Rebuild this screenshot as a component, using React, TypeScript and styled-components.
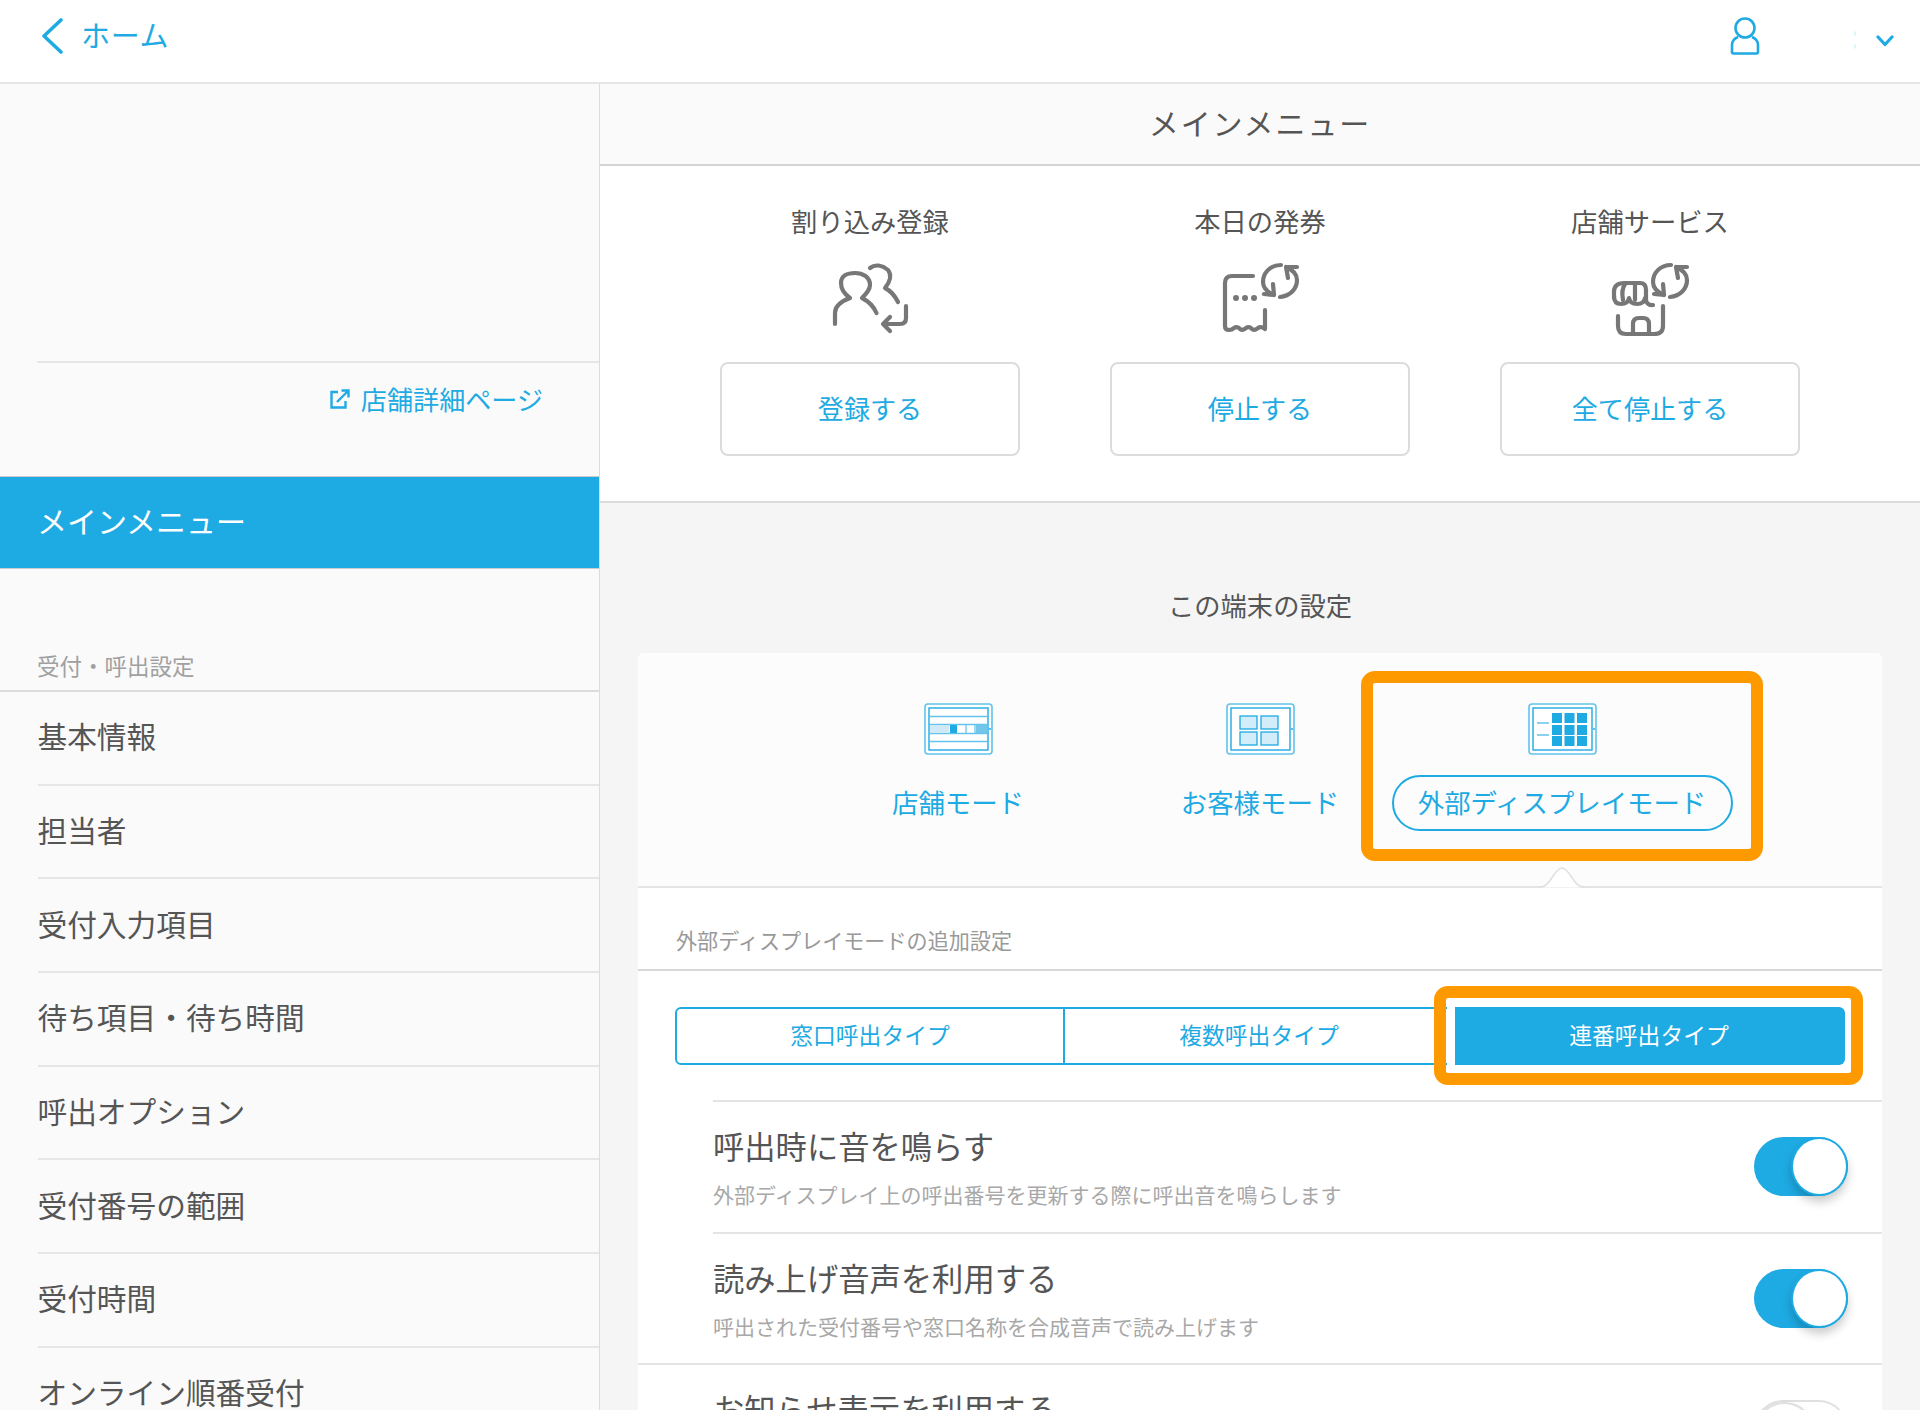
import React from "react";
import styled, { createGlobalStyle } from "styled-components";

const BLUE = "#1eaae3";
const ORANGE = "#ff9900";

const GlobalStyle = createGlobalStyle`
  html, body { margin: 0; padding: 0; background: #fff; overflow: hidden; }
  * { box-sizing: border-box; }
  body { font-family: "Noto Sans CJK JP", "Noto Sans", sans-serif; font-weight: 400; }
`;

const NAV_ITEMS = ["基本情報", "担当者", "受付入力項目", "待ち項目・待ち時間", "呼出オプション", "受付番号の範囲", "受付時間", "オンライン順番受付"];

const Page = styled.div`
  width: 1920px;
  height: 1410px;
  overflow: hidden;
  display: flex;
  flex-direction: column;
`;

const Header = styled.header`
  height: 84px;
  flex: none;
  display: flex;
  align-items: center;
  border-bottom: 2px solid #e6e6e6;
  background: #fff;
  padding: 0 26px 10px 40px;
`;

const BackLink = styled.a`
  display: flex;
  align-items: center;
  gap: 17px;
  color: ${BLUE};
  font-size: 29px;
  line-height: 36px;
  letter-spacing: 0.7px;
`;

const BackText = styled.span`
  display: block;
  margin-top: -5px;
`;

const HeaderRight = styled.div`
  margin-left: auto;
  display: flex;
  align-items: center;
  gap: 94px;
`;

const Sidebar = styled.aside`
  width: 600px;
  flex: none;
  background: #fafafa;
  border-right: 1px solid #dcdcdc;
  padding-top: 277px;
`;

const Body = styled.div`
  flex: 1;
  display: flex;
  min-height: 0;
`;

const StoreLinkRow = styled.div`
  margin-left: 37px;
  height: 115px;
  border-top: 2px solid #e6e6e6;
  display: flex;
  justify-content: flex-end;
  padding: 18px 56px 0 0;
`;

const StoreLink = styled.a`
  display: flex;
  align-items: center;
  height: 36px;
  gap: 11px;
  color: ${BLUE};
  font-size: 26.1px;
`;

const ActiveItem = styled.div`
  height: 93px;
  background: ${BLUE};
  border-top: 1px solid #c8ccd0;
  border-bottom: 1px solid #c8ccd0;
  color: #fff;
  font-size: 30px;
  display: flex;
  align-items: center;
  padding: 0 0 5px 37px;
`;

const NavHeading = styled.div`
  height: 123px;
  border-bottom: 2px solid #dcdcdc;
  color: #a0a0a0;
  font-size: 22.5px;
  display: flex;
  align-items: flex-end;
  padding: 0 0 9px 37px;
`;

const NavItem = styled.div`
  margin-left: 37.5px;
  height: 93.7px;
  flex: none;
  border-bottom: 2px solid #e6e6e6;
  color: #555;
  font-size: 29.7px;
  display: flex;
  align-items: center;
  padding-bottom: 4px;
`;

const Main = styled.main`
  flex: 1;
  min-width: 0;
  background: #f5f5f5;
`;

const MainTitle = styled.div`
  height: 82px;
  background: #fafafa;
  border-bottom: 2px solid #d4d4d4;
  color: #555;
  font-size: 30px;
  letter-spacing: 1.9px;
  display: flex;
  align-items: center;
  justify-content: center;
  padding-bottom: 5px;
`;

const ActionSection = styled.section`
  background: #fff;
  border-bottom: 2px solid #dcdcdc;
  display: grid;
  grid-template-columns: repeat(3, 300px);
  justify-content: center;
  column-gap: 90px;
  padding: 37px 0 45px;
`;

const ActionColumn = styled.div`
  display: flex;
  flex-direction: column;
  align-items: center;
`;

const ActionLabel = styled.div`
  height: 36px;
  line-height: 36px;
  color: #555;
  font-size: 26.3px;
`;

const ActionIconSvg = styled.svg`
  display: block;
  margin-top: 11px;
  fill: none;
  stroke: #777;
  stroke-width: 4.2;
  stroke-linecap: round;
  stroke-linejoin: round;
`;

const ActionButton = styled.div`
  margin-top: 22px;
  width: 300px;
  height: 94px;
  background: #fff;
  border: 2px solid #dcdcdc;
  border-radius: 8px;
  color: ${BLUE};
  font-size: 26.1px;
  display: flex;
  align-items: center;
  justify-content: center;
  padding-bottom: 3px;
`;

const SettingsTitle = styled.div`
  margin-top: 84px;
  height: 36px;
  line-height: 36px;
  text-align: center;
  color: #555;
  font-size: 26.3px;
`;

const Card = styled.section`
  margin: 30px 38px 0;
  background: #fff;
  border-radius: 6px 6px 0 0;
`;

const ModeBar = styled.div`
  position: relative;
  display: grid;
  grid-template-columns: repeat(3, 302px);
  justify-content: center;
  background: #fcfcfc;
  border-bottom: 2px solid #e4e4e4;
  padding: 50px 0 55px;
  border-radius: 6px 6px 0 0;
`;

const Mode = styled.div`
  position: relative;
  display: flex;
  flex-direction: column;
  align-items: center;
  gap: 20px;
`;

const ModeLabel = styled.div<{ $active?: boolean }>`
  position: relative;
  height: 56px;
  min-width: ${(p) => (p.$active ? "341px" : "0")};
  border: ${(p) => (p.$active ? `2px solid ${BLUE}` : "2px solid transparent")};
  border-radius: 28px;
  color: ${BLUE};
  font-size: 26.4px;
  display: flex;
  align-items: center;
  justify-content: center;
  padding-bottom: 3px;
`;

const ModeHighlight = styled.div`
  position: absolute;
  left: -33px;
  right: -32px;
  top: -106px;
  bottom: -32px;
  border: 12px solid ${ORANGE};
  border-radius: 14px;
  pointer-events: none;
`;

const Notch = styled.svg`
  position: absolute;
  left: 901px;
  bottom: -2px;
  fill: #fff;
  stroke: #e0e0e0;
  stroke-width: 1.5;
`;

const SubHeading = styled.div`
  height: 83px;
  border-bottom: 2px solid #d8d8d8;
  color: #999;
  font-size: 21.1px;
  display: flex;
  align-items: flex-end;
  padding: 0 0 14px 38px;
`;

const Segmented = styled.div`
  margin: 36px 37px 35px;
  height: 58px;
  display: grid;
  grid-template-columns: repeat(3, 1fr);
`;

const Segment = styled.div<{ $active?: boolean }>`
  position: relative;
  display: flex;
  align-items: center;
  justify-content: center;
  font-size: 22.8px;
  padding-bottom: 4px;
  color: ${(p) => (p.$active ? "#fff" : BLUE)};
  background: ${(p) => (p.$active ? BLUE : "#fff")};
  border: 2px solid ${BLUE};
  border-left-width: 0;
  box-shadow: ${(p) => (p.$active ? "-8px 0 0 #fff" : "none")};
  &:first-child {
    border-left-width: 2px;
    border-radius: 6px 0 0 6px;
  }
  &:last-child {
    border-radius: 0 6px 6px 0;
  }
`;

const SegmentHighlight = styled.div`
  position: absolute;
  left: -21px;
  right: -20px;
  top: -23px;
  bottom: -22px;
  border: 12px solid ${ORANGE};
  border-radius: 14px;
  pointer-events: none;
`;

const SettingRow = styled.div<{ $flush?: boolean }>`
  margin-left: ${(p) => (p.$flush ? "0" : "75px")};
  padding-left: ${(p) => (p.$flush ? "75px" : "0")};
  height: ${(p) => (p.$flush ? "140px" : "131.5px")};
  border-top: 2px solid #e4e4e4;
  display: flex;
  align-items: flex-start;
  justify-content: space-between;
  padding-top: 24px;
  padding-right: 34px;
`;

const RowTitle = styled.div`
  height: 40px;
  line-height: 40px;
  color: #555;
  font-size: 31.3px;
`;

const RowSub = styled.div`
  margin-top: 14px;
  height: 28px;
  line-height: 28px;
  color: #a8a8a8;
  font-size: 21px;
`;

const Toggle = styled.div<{ $on?: boolean }>`
  position: relative;
  flex: none;
  width: 94px;
  height: 59px;
  margin-top: 11px;
  border-radius: 30px;
  background: ${(p) => (p.$on ? BLUE : "#fff")};
  border: ${(p) => (p.$on ? "none" : "2px solid #e0e0e0")};
`;

const Knob = styled.div<{ $on?: boolean }>`
  position: absolute;
  top: 0;
  bottom: 0;
  left: ${(p) => (p.$on ? "auto" : "0")};
  right: ${(p) => (p.$on ? "0" : "auto")};
  width: 57px;
  border-radius: 50%;
  background: #fff;
  border: 2px solid ${(p) => (p.$on ? BLUE : "#e0e0e0")};
  box-shadow: 0 6px 10px rgba(0, 0, 0, 0.2);
`;

const SyncArrows = () => (
  <>
    <path d="M81 15C70 15 63 23 63 32C63 38 67 42 74 45M64 44L74 45L73 34" />
    <path d="M80 47C90 46 97 39 97 30C97 25 93 20 86 17M88 28L86 17L97 17" />
  </>
);

const ReservationIcon = () => (
  <ActionIconSvg width="120" height="90" viewBox="0 0 120 90">
    <path d="M25 74V63C25 55 32 51 40 48C33 43 31 38 31 33C31 26 37 23 45 23C53 23 60 27 60 35C60 40 56 44 52 48C58 51 63 55 66.5 63" />
    <path d="M60 18C65 14 72 15 78 20C82 25 80 32 75 38C81 41 85 46 88 52" />
    <path d="M96 56V68Q96 74 90 74H73M80 67L73 74L80 81" />
  </ActionIconSvg>
);

const TicketIcon = () => (
  <ActionIconSvg width="120" height="90" viewBox="0 0 120 90">
    <path d="M53 26H32Q25 26 25 33V76Q25 80 29 80Q32 80 34 78Q37 76 40 79Q43 81 46 78Q49 76 52 79Q55 81 58 78Q61 76 65 79V60" />
    <path d="M36 48h.01M45 48h.01M54 48h.01" strokeWidth="6" />
    <SyncArrows />
  </ActionIconSvg>
);

const ShopIcon = () => (
  <ActionIconSvg width="120" height="90" viewBox="0 0 120 90">
    <path d="M24 48V42Q24 33 34 33H50Q56 33 56 40V50" />
    <path d="M35 34Q31 40 33 50M45 34V50" />
    <path d="M24 46Q24 54 31 54Q38 54 39 48Q40 54 47 54Q54 54 55 48Q57 56 63 55" />
    <path d="M28 66V76Q28 84 36 84H64Q73 84 73 76V56" />
    <path d="M43 83V74Q43 68 49 68H53Q59 68 59 74V83" />
    <SyncArrows />
  </ActionIconSvg>
);

const TabletFrame = ({ children }: { children: React.ReactNode }) => (
  <svg width="69" height="52" viewBox="0 0 69 52" style={{ display: "block" }}>
    <rect x="1" y="1" width="67" height="50" rx="3" fill="#fff" stroke="#62c3ec" strokeWidth="1.6" />
    <rect x="5" y="5" width="59" height="42" fill="#fff" stroke={BLUE} strokeWidth="1.4" />
    <circle cx="66" cy="26" r="1" fill={BLUE} />
    {children}
  </svg>
);

const StoreModeIcon = () => (
  <TabletFrame>
    <path d="M5 13.5H64M5 21.5H64M5 30.5H64M5 38.5H64" stroke="#62c3ec" strokeWidth="1.4" />
    <rect x="6" y="22" width="19" height="8" fill="#cfe9f7" />
    <rect x="26" y="22" width="7" height="8" fill={BLUE} />
    <rect x="52" y="22" width="11" height="8" fill="#73c5ea" />
    <path d="M42 22V30M51 22V30" stroke="#62c3ec" strokeWidth="1.2" />
  </TabletFrame>
);

const CustomerModeIcon = () => (
  <TabletFrame>
    {[
      [14, 13],
      [35, 13],
      [14, 29],
      [35, 29],
    ].map(([x, y]) => (
      <rect key={`${x}-${y}`} x={x} y={y} width="17" height="13" fill="#d3ecf9" stroke={BLUE} strokeWidth="1.3" />
    ))}
  </TabletFrame>
);

const DisplayModeIcon = () => (
  <TabletFrame>
    {[10, 22, 33].map((y) =>
      [24, 36.5, 49].map((x) => <rect key={`${x}-${y}`} x={x} y={y} width="10" height="10" fill={BLUE} />)
    )}
    <path d="M9 20H21M9 32H21" stroke="#62c3ec" strokeWidth="1.6" />
  </TabletFrame>
);

const ACTIONS = [
  { label: "割り込み登録", button: "登録する", Icon: ReservationIcon },
  { label: "本日の発券", button: "停止する", Icon: TicketIcon },
  { label: "店舗サービス", button: "全て停止する", Icon: ShopIcon },
];

const App = () => {
  return (
    <>
      <GlobalStyle />
      <Page>
        <Header>
          <BackLink>
            <svg width="24" height="36" viewBox="0 0 24 36" fill="none" stroke={BLUE} strokeWidth="3.6" strokeLinecap="round" strokeLinejoin="round">
              <path d="M21 2L4 18L21 34" />
            </svg>
            <BackText>ホーム</BackText>
          </BackLink>
          <HeaderRight>
            <svg width="30" height="38" viewBox="0 0 30 38" fill="none" stroke={BLUE} strokeWidth="2.6" strokeLinejoin="round">
              <circle cx="15" cy="11" r="9.5" />
              <path d="M8 20C3 22 2 25 2 28V35Q2 36.5 3.5 36.5H26.5Q28 36.5 28 35V28C28 25 27 22 22 20" />
            </svg>
            <svg width="40" height="20" viewBox="0 0 40 20" fill="none" strokeLinecap="round" strokeLinejoin="round" style={{ marginTop: 9 }}>
              <path d="M1 1V4M1 14V17" stroke="#d4eefa" strokeWidth="1.4" />
              <path d="M24 6L31 13.5L38 6" stroke={BLUE} strokeWidth="3.2" />
            </svg>
          </HeaderRight>
        </Header>
        <Body>
          <Sidebar>
            <StoreLinkRow>
              <StoreLink>
                <svg width="20" height="20" viewBox="0 0 20 20" fill="none" stroke={BLUE} strokeWidth="2.4">
                  <path d="M8 3H1.5V18.5H15.5V12" />
                  <path d="M7 13L18 2M11.5 1.5H18.5V8.5" />
                </svg>
                店舗詳細ページ
              </StoreLink>
            </StoreLinkRow>
            <ActiveItem>メインメニュー</ActiveItem>
            <NavHeading>受付・呼出設定</NavHeading>
            {NAV_ITEMS.map((item) => (
              <NavItem key={item}>{item}</NavItem>
            ))}
          </Sidebar>
          <Main>
            <MainTitle>メインメニュー</MainTitle>
            <ActionSection>
              {ACTIONS.map(({ label, button, Icon }) => (
                <ActionColumn key={label}>
                  <ActionLabel>{label}</ActionLabel>
                  <Icon />
                  <ActionButton>{button}</ActionButton>
                </ActionColumn>
              ))}
            </ActionSection>
            <SettingsTitle>この端末の設定</SettingsTitle>
            <Card>
              <ModeBar>
                <Mode>
                  <StoreModeIcon />
                  <ModeLabel>店舗モード</ModeLabel>
                </Mode>
                <Mode>
                  <CustomerModeIcon />
                  <ModeLabel>お客様モード</ModeLabel>
                </Mode>
                <Mode>
                  <DisplayModeIcon />
                  <ModeLabel $active>
                    外部ディスプレイモード
                    <ModeHighlight />
                  </ModeLabel>
                </Mode>
                <Notch width="46" height="22" viewBox="0 0 46 22">
                  <path d="M0 21.5C12 21.5 15 2 23 2C31 2 34 21.5 46 21.5" />
                </Notch>
              </ModeBar>
              <SubHeading>外部ディスプレイモードの追加設定</SubHeading>
              <Segmented>
                <Segment>窓口呼出タイプ</Segment>
                <Segment>複数呼出タイプ</Segment>
                <Segment $active>
                  連番呼出タイプ
                  <SegmentHighlight />
                </Segment>
              </Segmented>
              <SettingRow>
                <div>
                  <RowTitle>呼出時に音を鳴らす</RowTitle>
                  <RowSub>外部ディスプレイ上の呼出番号を更新する際に呼出音を鳴らします</RowSub>
                </div>
                <Toggle $on>
                  <Knob $on />
                </Toggle>
              </SettingRow>
              <SettingRow>
                <div>
                  <RowTitle>読み上げ音声を利用する</RowTitle>
                  <RowSub>呼出された受付番号や窓口名称を合成音声で読み上げます</RowSub>
                </div>
                <Toggle $on>
                  <Knob $on />
                </Toggle>
              </SettingRow>
              <SettingRow $flush>
                <div>
                  <RowTitle>お知らせ表示を利用する</RowTitle>
                </div>
                <Toggle>
                  <Knob />
                </Toggle>
              </SettingRow>
            </Card>
          </Main>
        </Body>
      </Page>
    </>
  );
};

export default App;
